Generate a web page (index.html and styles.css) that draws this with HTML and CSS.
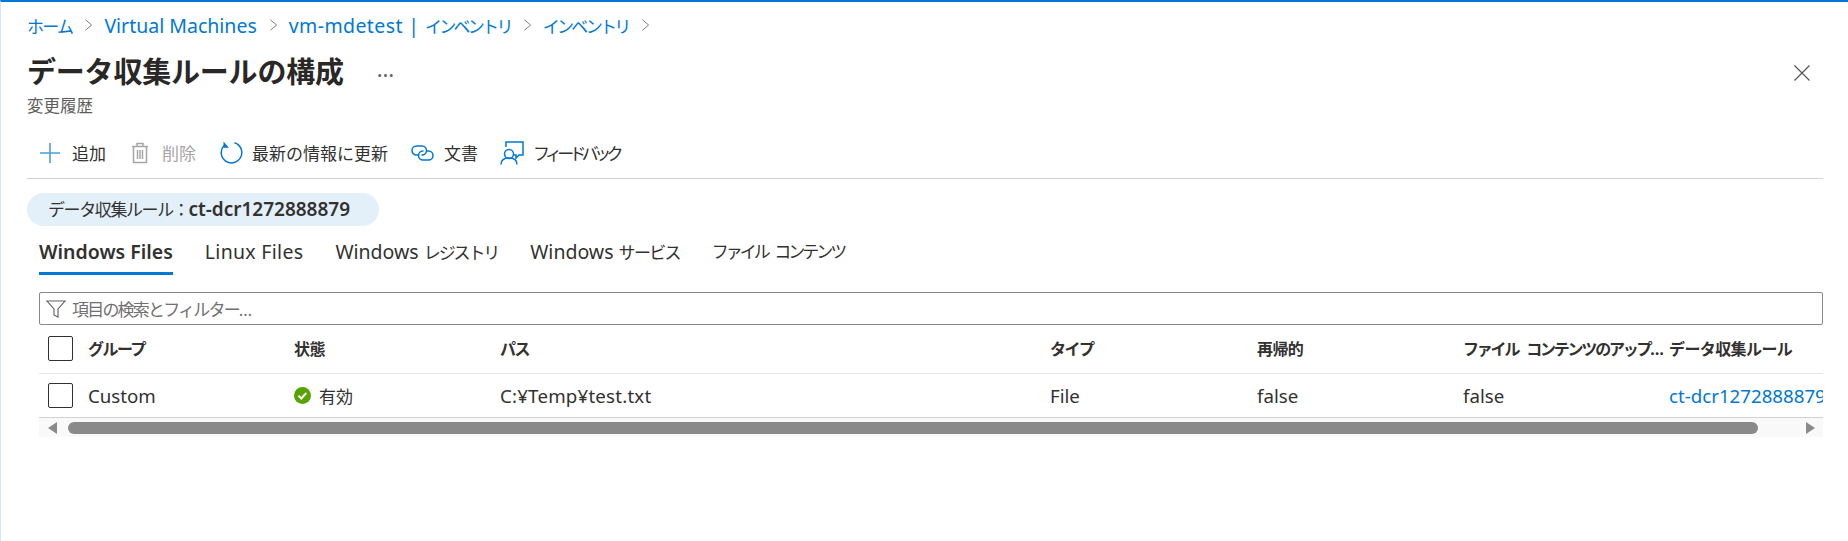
FILE: index.html
```html
<!DOCTYPE html>
<html lang="ja">
<head>
<meta charset="utf-8">
<title>データ収集ルールの構成</title>
<link rel="stylesheet" href="styles.css">
</head>
<body>
<div class="page">
  <nav class="crumbs">
    <a class="k">ホーム</a><svg class="chev" viewBox="0 0 10 16"><path d="M1.5 2l7 6-7 6"/></svg>
    <a class="l">Virtual Machines</a><svg class="chev" viewBox="0 0 10 16"><path d="M1.5 2l7 6-7 6"/></svg>
    <a><span class="l vm">vm-mdetest | </span><span class="k4">インベントリ</span></a><svg class="chev" viewBox="0 0 10 16"><path d="M1.5 2l7 6-7 6"/></svg>
    <a class="k4">インベントリ</a><svg class="chev" viewBox="0 0 10 16"><path d="M1.5 2l7 6-7 6"/></svg>
  </nav>
  <header class="head">
    <h1>データ収集ルールの構成</h1>
    <span class="more">…</span>
    <svg class="close" viewBox="0 0 16 16"><path d="M.5.5l15 15M15.5.5l-15 15"/></svg>
  </header>
  <div class="sub">変更履歴</div>
  <div class="toolbar">
    <button class="tool t-add">
      <svg class="ic" width="22" height="22" viewBox="0 0 22 22"><path class="blue" d="M11 1v20M1 11h20"/></svg>追加
    </button>
    <button class="tool t-del off">
      <svg class="ic" width="18" height="22" viewBox="0 0 18 22"><path class="grey" d="M1 4.500h16M6 4.500V1.500h6v3M2.500 4.500v16h13v-16M6.500 8v9M9 8v9M11.500 8v9"/></svg>削除
    </button>
    <button class="tool t-ref">
      <svg class="ic" width="23" height="23" viewBox="0 0 23 23"><path class="blue2" d="M14.500 1.700A10.300 10.300 0 1 1 4 4.500"/><path class="fillblue" d="M3.500.5l5.500 6.200-5.500 0z"/></svg>最新の情報に更新
    </button>
    <button class="tool t-doc">
      <svg class="ic" width="23" height="16" viewBox="0 0 23 16"><path class="blue2" d="M8 10H5.500a4.500 4.500 0 0 1 0-9H11a4.500 4.500 0 0 1 0 9h-.5"/><path class="blue2" d="M15 6h2.500a4.500 4.500 0 0 1 0 9H12a4.500 4.500 0 0 1 0-9h.5"/></svg><span>文書</span>
    </button>
    <button class="tool t-fb">
      <svg class="ic" width="24" height="24" viewBox="0 0 24 24"><path class="blue2" d="M6 6V1h17v13h-4l-3 3v-3h-2"/><circle class="blue2" cx="9" cy="13" r="4.500"/><path class="blue2" d="M1 23.500c0-4.500 3-6.500 8-6.500s8 2 8 6.500"/></svg><span class="k2">フィードバック</span>
    </button>
  </div>
  <div class="chip"><span class="k3">データ収集ルール：</span><b>ct-dcr1272888879</b></div>
  <div class="tabs">
    <a class="tab on l">Windows Files</a>
    <a class="tab l wide">Linux Files</a>
    <a class="tab"><span class="l">Windows </span><span class="k5">レジストリ</span></a>
    <a class="tab"><span class="l">Windows </span><span class="k">サービス</span></a>
    <a class="tab k6">ファイル コンテンツ</a>
  </div>
  <div class="filter">
    <svg class="funnel" width="20" height="20" viewBox="0 0 20 20"><path d="M1 2h18l-7 8v8l-4-2v-6z"/></svg>
    <span>項目の検索とフィルター…</span>
  </div>
  <div class="grid">
    <div class="row hdr">
      <div class="cell c0"><span class="box"></span></div>
      <div class="cell c1 kana">グループ</div>
      <div class="cell c2">状態</div>
      <div class="cell c3 kana">パス</div>
      <div class="cell c4 kana">タイプ</div>
      <div class="cell c5">再帰的</div>
      <div class="cell c6 tight">ファイル コンテンツのアップ…</div>
      <div class="cell c7">データ収集ルール</div>
    </div>
    <div class="row dat">
      <div class="cell c0"><span class="box"></span></div>
      <div class="cell c1">Custom</div>
      <div class="cell c2"><svg class="ok" width="17" height="17" viewBox="0 0 17 17"><circle cx="8.500" cy="8.500" r="8.500"/><path d="M4.500 8.800l2.800 2.700 5-5.500"/></svg><span class="cj">有効</span></div>
      <div class="cell c3 path">C:¥Temp¥test.txt</div>
      <div class="cell c4">File</div>
      <div class="cell c5">false</div>
      <div class="cell c6">false</div>
      <div class="cell c7"><a>ct-dcr1272888879</a></div>
    </div>
    <div class="scroll">
      <span class="arrow left"></span>
      <span class="thumb"></span>
      <span class="arrow right"></span>
    </div>
  </div>
</div>
</body>
</html>
```
FILE: styles.css
```css
* { box-sizing: border-box; }
html, body { margin: 0; height: 100%; background: #fff; }
body {
  font-family: "Noto Sans", "Noto Sans CJK JP", sans-serif;
  font-size: 17px;
  color: #323130;
  overflow: hidden;
}
.l { font-size: 19.5px; }
.vm { letter-spacing: 0.400px; }
.wide { letter-spacing: 0.3px; }
.k { font-size: 17px; letter-spacing: -1.7px; }
.k2 { letter-spacing: -4.700px; }
.k3 { letter-spacing: -1.400px; }
.k4 { font-size: 17px; letter-spacing: -2.700px; }
.k5 { font-size: 17px; letter-spacing: -2.100px; }
.k6 { font-size: 17px; letter-spacing: -3px; word-spacing: 5px; }
.page {
  height: 541px;
  border-top: 2px solid #0078d4;
  border-left: 1px solid #d5e3f3;
  padding: 0 25px 0 26px;
  display: flex;
  flex-direction: column;
}
.crumbs {
  display: flex;
  align-items: center;
  height: 40px;
  margin-top: 3px;
  color: #0078d4;
}
.crumbs a { white-space: pre; }
.chev { width: 9px; height: 14px; margin: 0 11px 0 12px; flex: none; }
.chev path { fill: none; stroke: #6b6a69; stroke-width: 1; }
.head { display: flex; align-items: center; height: 46px; margin-top: 4px; }
h1 { margin: 0; font-size: 29px; font-weight: 700; letter-spacing: -0.200px; color: #292827; line-height: 46px; }
.more { margin-left: 33px; font-size: 22px; line-height: 20px; margin-top: -8px; color: #666; }
.close { width: 16px; height: 16px; margin-left: auto; margin-right: 13px; margin-top: 1px; }
.close path { stroke: #555; stroke-width: 1.2; fill: none; }
.sub { font-size: 16.500px; color: #605e5c; line-height: 22px; }
.toolbar {
  display: flex;
  align-items: center;
  height: 54px;
  margin-top: 8px;
  padding: 2px 0 0 12px;
  border-bottom: 1px solid #d2d2d2;
}
.tool {
  display: flex;
  align-items: center;
  gap: 11px;
  border: 0;
  background: none;
  padding: 0;
  font: inherit;
  color: #323130;
  margin-right: 22px;
}
.t-add { margin-right: 25px; }
.t-del { gap: 13px; margin-right: 24px; }
.t-ref { gap: 9px; margin-right: 23px; }
.t-doc { gap: 10px; }
.t-fb { gap: 9px; }
.tool.off { color: #a6a6a6; }
.ic { flex: none; }
.blue { stroke: #4a9fe0; stroke-width: 1.6; fill: none; }
.blue2 { stroke: #0078d4; stroke-width: 1.500; fill: none; }
.fillblue { fill: #0078d4; }
.grey { stroke: #a6a6a6; stroke-width: 1.500; fill: none; }
.chip {
  align-self: flex-start;
  height: 33px;
  margin-top: 14px;
  padding: 0 29px 0 21px;
  border-radius: 17px;
  background: #e3f0fa;
  line-height: 33px;
  font-size: 17px;
  white-space: nowrap;
}
.chip b { font-weight: 600; font-size: 19px; }
.tabs { display: flex; margin: 2px 0 0 12px; gap: 32px; height: 56px; }
.tab { height: 47px; padding-top: 12px; line-height: 24px; white-space: pre; }
.tab.on { font-weight: 600; border-bottom: 3px solid #0078d4; height: 37px; padding-top: 2px; margin-top: 10px; }
.filter {
  height: 33px;
  margin: 8px 0 0 12px;
  width: 1784px;
  border: 1px solid #8a8886;
  border-radius: 2px;
  display: flex;
  align-items: center;
  padding-left: 6px;
  gap: 6px;
  color: #707070;
  font-size: 17px;
  letter-spacing: -1.800px;
}
.funnel path { fill: none; stroke: #605e5c; stroke-width: 1.1; }
.grid { margin-left: 12px; width: 1784px; overflow: hidden; }
.row { display: grid; grid-template-columns: 49px 206px 206px 550px 207px 206px 206px 206px; align-items: center; }
.hdr { height: 49px; border-bottom: 1px solid #e8e8e8; font-weight: 700; font-size: 16px; letter-spacing: -0.600px; padding-bottom: 2px; }
.hdr .kana { letter-spacing: -1.500px; }
.dat { height: 44px; border-bottom: 1px solid #d2d2d2; font-size: 18.700px; }
.cell { white-space: nowrap; overflow: hidden; }
.hdr .tight { letter-spacing: -2.200px; word-spacing: 6px; }
.path { letter-spacing: 0.200px; }
.c2 { display: flex; align-items: center; gap: 8px; }
.cj { font-size: 17px; }
.c7 a { color: #0078d4; }
.box { display: block; width: 25px; height: 25px; margin-left: 9px; border: 1px solid #323130; border-radius: 2px; }
.ok circle { fill: #57a300; }
.ok path { fill: none; stroke: #fff; stroke-width: 2; }
.scroll {
  display: flex;
  align-items: center;
  height: 19px;
  background: #f9f9f9;
  padding: 0 8px 0 9px;
}
.thumb { height: 12px; width: 1690px; margin-left: 11px; background: #8a8a8a; border-radius: 6px; }
.arrow { width: 0; height: 0; border-top: 6px solid transparent; border-bottom: 6px solid transparent; }
.arrow.left { border-right: 9px solid #8a8a8a; }
.arrow.right { border-left: 9px solid #8a8a8a; margin-left: auto; }
```
